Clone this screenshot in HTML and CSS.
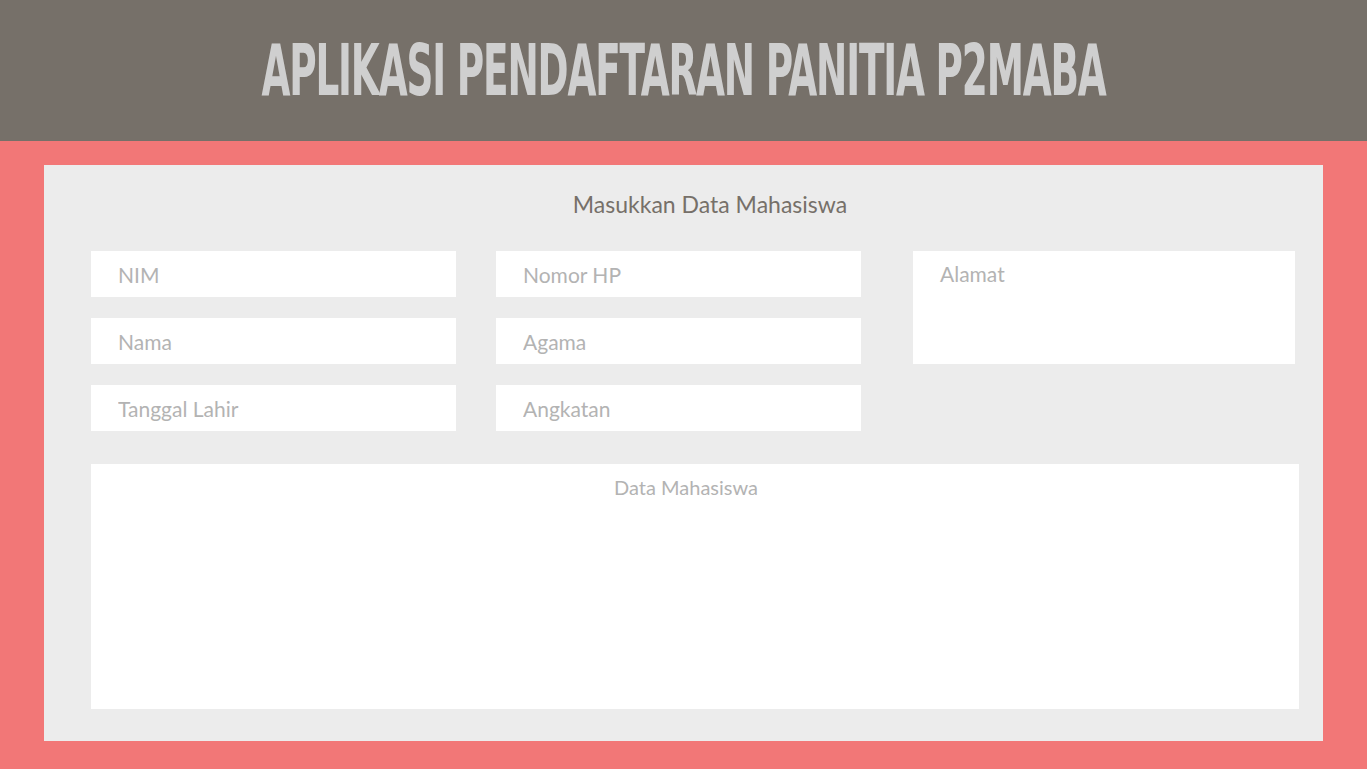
FILE: index.html
```html
<!DOCTYPE html>
<html lang="id">
<head>
    <meta charset="utf-8">
    <title>Aplikasi Pendaftaran Panitia P2MABA</title>
    <link rel="stylesheet" href="styles.css">
</head>
<body>
    <div class="header">
        <h1 class="title"><span>APLIKASI PENDAFTARAN PANITIA P2MABA</span></h1>
    </div>
    <div class="main">
        <div class="panel">
            <h2 class="panel-title">Masukkan Data Mahasiswa</h2>
            <div class="form">
                <input class="field nim" type="text" placeholder="NIM">
                <input class="field hp" type="text" placeholder="Nomor HP">
                <textarea class="field alamat" placeholder="Alamat"></textarea>
                <input class="field nama" type="text" placeholder="Nama">
                <input class="field agama" type="text" placeholder="Agama">
                <input class="field lahir" type="text" placeholder="Tanggal Lahir">
                <input class="field angkatan" type="text" placeholder="Angkatan">
            </div>
            <div class="data">
                <div class="data-title">Data Mahasiswa</div>
            </div>
        </div>
    </div>
</body>
</html>
```

FILE: styles.css
```css
* {
    box-sizing: border-box;
}

html,
body {
    margin: 0;
    padding: 0;
    height: 100%;
}

body {
    background: #f27777;
    font-family: Lato, "Open Sans", sans-serif;
    overflow: hidden;
}

.header {
    height: 141px;
    background: #767069;
    display: flex;
    align-items: center;
    justify-content: center;
    overflow: hidden;
}

.title {
    margin: 0;
    color: #cfcfcf;
    font-family: "DejaVu Sans Condensed", "Liberation Sans", sans-serif;
    font-weight: 700;
    font-size: 72px;
    line-height: 1;
    white-space: nowrap;
    letter-spacing: -2px;
    width: 843px;
    display: flex;
    justify-content: center;
}

.title span {
    display: inline-block;
    transform: scaleX(0.577);
    margin-top: -1px;
}

.main {
    padding: 24px 44px 28px 44px;
}

.panel {
    background: #ececec;
    height: 576px;
    padding: 25px 24px 32px 47px;
}

.panel-title {
    margin: 0 0 33px 0;
    padding-left: 30px;
    text-align: center;
    font-size: 23px;
    font-weight: 400;
    color: #767069;
    line-height: 28px;
}

.form {
    display: grid;
    grid-template-columns: 365px 365px 382px;
    grid-auto-rows: 46px;
    column-gap: 40px;
    row-gap: 21px;
}

.form .alamat {
    grid-row: span 2;
    margin-left: 12px;
    width: 382px;
}

.form .nama {
    grid-column: 1;
}

.field {
    border: none;
    outline: none;
    background: #fff;
    font-family: inherit;
    font-size: 21px;
    color: #555;
    padding: 0 27px;
    width: 100%;
    height: 100%;
    resize: none;
}

.field::placeholder {
    color: #b3b3b3;
}

.alamat {
    padding-top: 10px;
    line-height: 26px;
}

.data {
    margin-top: 33px;
    height: 245px;
    background: #fff;
    padding-top: 11px;
}

.data-title {
    text-align: center;
    padding-right: 18px;
    font-size: 20px;
    color: #b3b3b3;
}
```
